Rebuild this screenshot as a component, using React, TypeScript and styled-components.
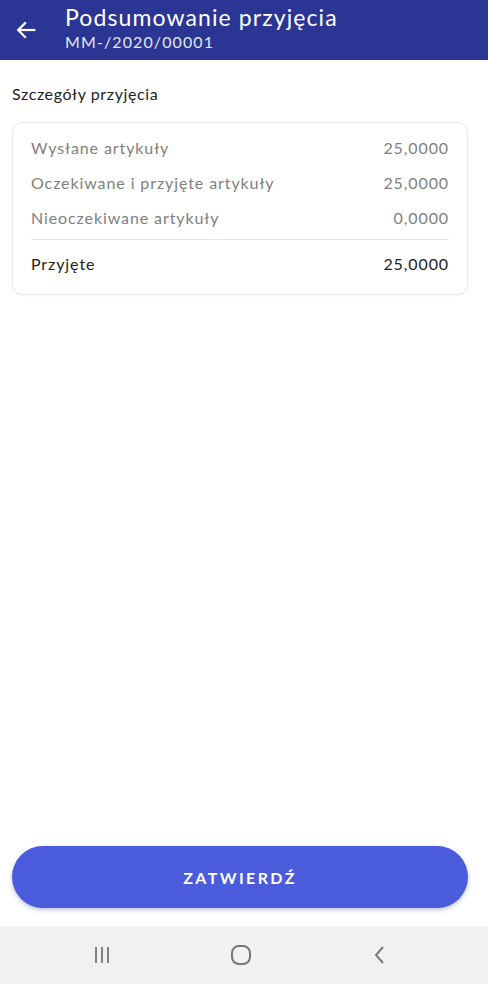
import * as React from 'react'
import styled, { createGlobalStyle } from 'styled-components'

const GlobalStyle = createGlobalStyle`
  html, body {
    margin: 0;
    padding: 0;
    background: #ffffff;
  }
  body {
    font-family: 'Lato', 'Noto Sans', sans-serif;
  }
`

const Screen = styled.div`
  width: 488px;
  height: 984px;
  display: flex;
  flex-direction: column;
  background: #ffffff;
  overflow: hidden;
`

const AppBar = styled.header`
  height: 60px;
  background: #2b3593;
  display: flex;
  align-items: center;
  color: #ffffff;
  flex-shrink: 0;
`

const BackButton = styled.div`
  width: 52px;
  height: 52px;
  display: flex;
  align-items: center;
  justify-content: center;
  margin-right: 13px;
`

const Titles = styled.div`
  display: flex;
  flex-direction: column;
`

const Title = styled.div`
  font-size: 23px;
  line-height: 27px;
  letter-spacing: 1.1px;
  margin-top: -4px;
`

const Subtitle = styled.div`
  font-size: 16px;
  line-height: 22px;
  letter-spacing: 1.1px;
  color: #e4e6f4;
`

const Content = styled.main`
  flex: 1;
  padding: 0 20px 0 12px;
  display: flex;
  flex-direction: column;
`

const SectionTitle = styled.div`
  font-size: 16px;
  color: #1e1e1e;
  letter-spacing: 0.6px;
  margin-top: 24px;
  margin-bottom: 19px;
`

const Card = styled.section`
  border: 1px solid #e8e8e8;
  border-radius: 10px;
  padding: 7px 18px 13px 18px;
  box-shadow: 0 1px 2px rgba(0, 0, 0, 0.04);
`

const Row = styled.div<{ $strong?: boolean }>`
  display: flex;
  justify-content: space-between;
  align-items: center;
  height: 35px;
  font-size: 16px;
  font-weight: 400;
  letter-spacing: 0.9px;
  color: ${p => (p.$strong ? '#222222' : '#808080')};
`

const Divider = styled.div`
  height: 1px;
  background: #e6e6e6;
  margin: 4px 0 6px;
`

const Footer = styled.div`
  padding: 0 20px 18px 12px;
`

const ConfirmButton = styled.button`
  width: 100%;
  height: 62px;
  border: none;
  border-radius: 31px;
  background: #4a5bdb;
  color: #ffffff;
  font-family: 'Lato', sans-serif;
  font-weight: 700;
  font-size: 16px;
  letter-spacing: 2.4px;
  box-shadow: 0 2px 4px rgba(40, 50, 140, 0.3);
`

const NavBar = styled.nav`
  height: 58px;
  background: #f1f1f1;
  display: flex;
  align-items: center;
  justify-content: space-between;
  padding: 0 88px 0 82px;
  flex-shrink: 0;
`

const NavSlot = styled.div`
  width: 40px;
  height: 40px;
  display: flex;
  align-items: center;
  justify-content: center;
`

const rows = [
  { label: 'Wysłane artykuły', value: '25,0000' },
  { label: 'Oczekiwane i przyjęte artykuły', value: '25,0000' },
  { label: 'Nieoczekiwane artykuły', value: '0,0000' },
]

export default function App() {
  return (
    <Screen>
      <GlobalStyle />
      <AppBar>
        <BackButton>
          <svg width="22" height="22" viewBox="0 0 24 24" fill="none" stroke="#fff" strokeWidth="2.4" strokeLinecap="square">
            <path d="M21 12H4" />
            <path d="M11 4.5L3.5 12l7.5 7.5" />
          </svg>
        </BackButton>
        <Titles>
          <Title>Podsumowanie przyjęcia</Title>
          <Subtitle>MM-/2020/00001</Subtitle>
        </Titles>
      </AppBar>

      <Content>
        <SectionTitle>Szczegóły przyjęcia</SectionTitle>
        <Card>
          {rows.map(r => (
            <Row key={r.label}>
              <span>{r.label}</span>
              <span>{r.value}</span>
            </Row>
          ))}
          <Divider />
          <Row $strong>
            <span>Przyjęte</span>
            <span>25,0000</span>
          </Row>
        </Card>
      </Content>

      <Footer>
        <ConfirmButton>ZATWIERDŹ</ConfirmButton>
      </Footer>

      <NavBar>
        <NavSlot>
          <svg width="20" height="20" viewBox="0 0 20 20" stroke="#777" strokeWidth="1.8">
            <path d="M4 2v16M10 2v16M16 2v16" />
          </svg>
        </NavSlot>
        <NavSlot>
          <svg width="22" height="22" viewBox="0 0 22 22" fill="none" stroke="#777" strokeWidth="2">
            <rect x="2" y="2" width="18" height="18" rx="7" />
          </svg>
        </NavSlot>
        <NavSlot>
          <svg width="16" height="20" viewBox="0 0 16 20" fill="none" stroke="#777" strokeWidth="1.9">
            <path d="M11 2L4 10l7 8" />
          </svg>
        </NavSlot>
      </NavBar>
    </Screen>
  )
}
